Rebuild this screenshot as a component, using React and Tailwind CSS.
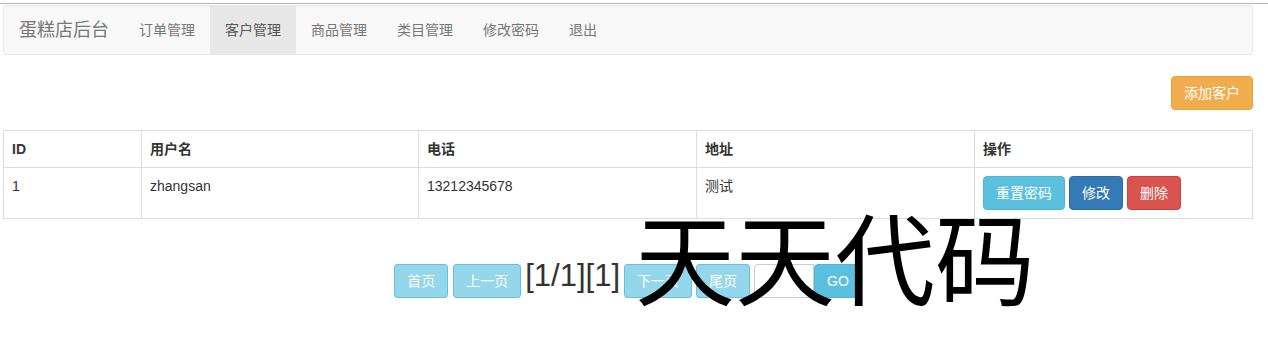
import React from 'react';

const font = { fontFamily: '"Liberation Sans", Arial, "Noto Sans CJK SC", sans-serif' };

const navItems = ['订单管理', '客户管理', '商品管理', '类目管理', '修改密码', '退出'];

const App = () => {
  return (
    <div className="relative w-[1268px] h-[346px] bg-white text-[14px] text-[#333] overflow-hidden" style={font}>
      <div className="pt-[3px]">
        <div className="h-px bg-[#b4b4b4]"></div>
      </div>

      <div className="w-[1250px] ml-[3px] mt-px">
        {/* Navbar */}
        <nav className="h-[50px] flex items-stretch bg-[#f8f8f8] border border-[#e7e7e7] rounded">
          <a className="px-[15px] flex items-center text-[18px] leading-[20px] text-[#777]">蛋糕店后台</a>
          <ul className="flex">
            {navItems.map((item) => (
              <li
                key={item}
                className={
                  item === '客户管理'
                    ? 'px-[15px] flex items-center leading-[20px] bg-[#e7e7e7] text-[#555]'
                    : 'px-[15px] flex items-center leading-[20px] text-[#777]'
                }
              >
                {item}
              </li>
            ))}
          </ul>
        </nav>

        <div className="flex justify-end mt-[21px]">
          <button className="h-[34px] px-[12px] leading-[20px] text-white bg-[#f0ad4e] border border-[#eea236] rounded">添加客户</button>
        </div>

        {/* Table */}
        <table className="w-full mt-[20px] border-collapse border border-[#ddd] text-left">
          <thead>
            <tr>
              <th className="w-[138px] p-[8px] leading-[20px] border border-[#ddd] font-bold">ID</th>
              <th className="w-[277px] p-[8px] leading-[20px] border border-[#ddd] font-bold">用户名</th>
              <th className="w-[278px] p-[8px] leading-[20px] border border-[#ddd] font-bold">电话</th>
              <th className="w-[278px] p-[8px] leading-[20px] border border-[#ddd] font-bold">地址</th>
              <th className="p-[8px] leading-[20px] border border-[#ddd] font-bold">操作</th>
            </tr>
          </thead>
          <tbody>
            <tr>
              <td className="p-[8px] leading-[20px] border border-[#ddd] align-top">1</td>
              <td className="p-[8px] leading-[20px] border border-[#ddd] align-top">zhangsan</td>
              <td className="p-[8px] leading-[20px] border border-[#ddd] align-top">13212345678</td>
              <td className="p-[8px] leading-[20px] border border-[#ddd] align-top">测试</td>
              <td className="p-[8px] leading-[20px] border border-[#ddd] align-top">
                <div className="flex gap-[4px]">
                  <button className="h-[34px] px-[12px] text-white bg-[#5bc0de] border border-[#46b8da] rounded">重置密码</button>
                  <button className="h-[34px] px-[12px] text-white bg-[#337ab7] border border-[#2e6da4] rounded">修改</button>
                  <button className="h-[34px] px-[12px] text-white bg-[#d9534f] border border-[#d43f3a] rounded">删除</button>
                </div>
              </td>
            </tr>
          </tbody>
        </table>

        {/* Pagination */}
        <div className="flex justify-center items-baseline mt-[40px]">
          <button className="h-[34px] px-[12px] leading-[20px] text-white bg-[#5bc0de]/65 border border-[#46b8da]/65 rounded">首页</button>
          <button className="ml-[5px] h-[34px] px-[12px] leading-[20px] text-white bg-[#5bc0de]/65 border border-[#46b8da]/65 rounded">上一页</button>
          <span className="ml-[4px] text-[31px] leading-[34px] text-[#333]">[1/1][1]</span>
          <button className="ml-[4px] h-[34px] px-[12px] leading-[20px] text-white bg-[#5bc0de]/65 border border-[#46b8da]/65 rounded">下一页</button>
          <button className="ml-[4px] h-[34px] px-[12px] leading-[20px] text-white bg-[#5bc0de]/65 border border-[#46b8da]/65 rounded">尾页</button>
          <input className="ml-[4px] w-[60px] h-[34px] border border-[#ccc] rounded-l-[4px] self-end" />
          <button className="h-[34px] px-[12px] leading-[20px] text-white bg-[#5bc0de] border border-[#46b8da] rounded">GO</button>
        </div>
      </div>

      {/* Watermark */}
      <div
        className="absolute left-[635px] top-[205px] text-[100px] leading-[100px] text-black whitespace-nowrap"
        style={{ fontFamily: '"Noto Sans CJK SC", sans-serif' }}
      >
        天天代码
      </div>
    </div>
  );
};

export default App;
